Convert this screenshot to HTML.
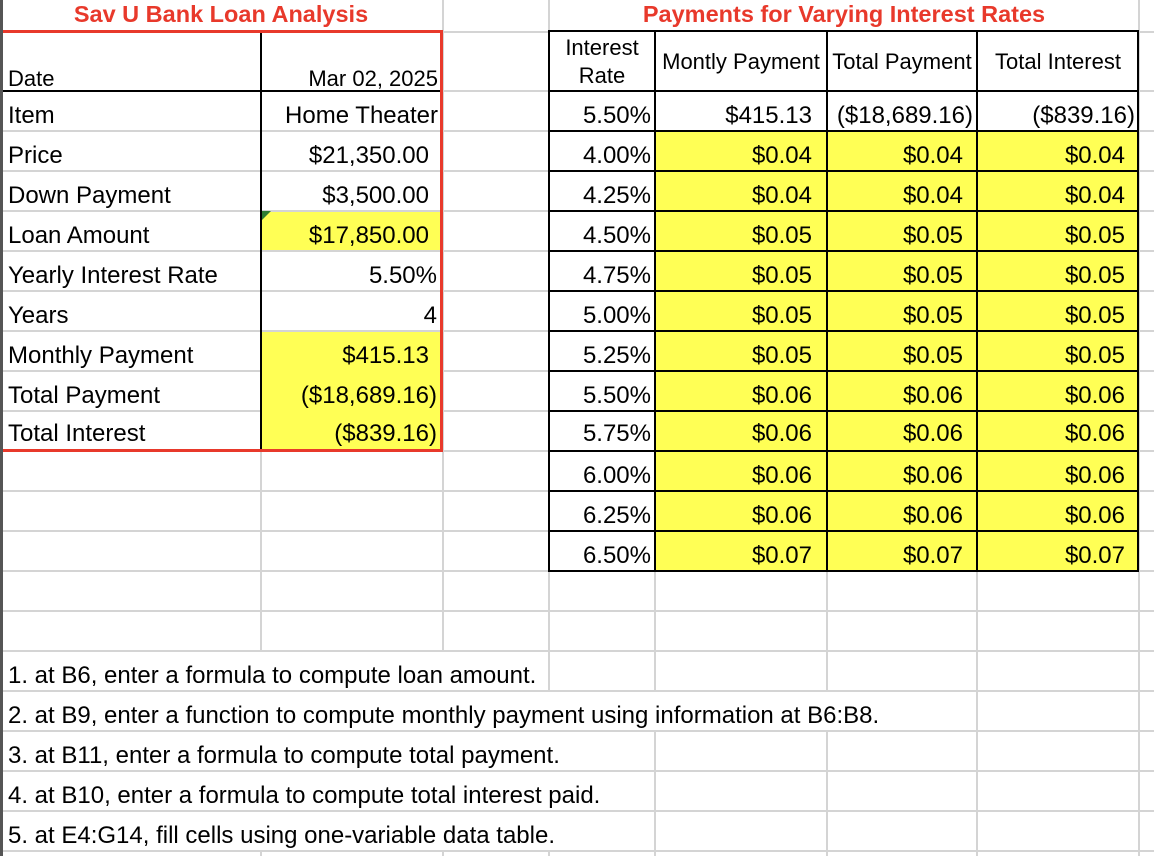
<!DOCTYPE html>
<html><head><meta charset="utf-8"><style>
*{margin:0;padding:0;box-sizing:border-box}
body{width:1154px;height:856px;background:#fff;position:relative;overflow:hidden;font-family:"Liberation Sans",Arial,sans-serif;font-size:24px;color:#000}
div{position:absolute}
.h{height:2px;background:#d4d4d4;left:0;width:1154px}
.v{width:2px;background:#d4d4d4;top:0;height:856px}
.y{background:#ffff55}
.t{line-height:40px;white-space:nowrap}
.r{text-align:right}
.bk{background:#000}
.rd{background:#e8392b}
.w{background:#fff}
.s{font-size:22px}
</style></head><body>
<div class="h" style="top:31px"></div><div class="h" style="top:90px"></div>
<div class="h" style="top:130px"></div><div class="h" style="top:170px"></div>
<div class="h" style="top:210px"></div><div class="h" style="top:250px"></div>
<div class="h" style="top:290px"></div><div class="h" style="top:330px"></div>
<div class="h" style="top:370px"></div><div class="h" style="top:410px"></div>
<div class="h" style="top:450px"></div><div class="h" style="top:490px"></div>
<div class="h" style="top:530px"></div><div class="h" style="top:570px"></div>
<div class="h" style="top:610px"></div><div class="h" style="top:650px"></div>
<div class="h" style="top:690px"></div><div class="h" style="top:730px"></div>
<div class="h" style="top:770px"></div><div class="h" style="top:810px"></div>
<div class="h" style="top:850px"></div>
<div class="v" style="left:260px"></div><div class="v" style="left:442px"></div>
<div class="v" style="left:548px"></div><div class="v" style="left:654px"></div>
<div class="v" style="left:826px"></div><div class="v" style="left:976px"></div>
<div class="v" style="left:1138px"></div>
<div style="left:0;top:0;width:3px;height:856px;background:#555"></div>
<div class="w" style="left:3px;top:0;width:438px;height:31px"></div>
<div class="w" style="left:551px;top:0;width:586px;height:31px"></div>
<div style="left:0;top:-3px;width:442px;text-align:center;color:#e8392b;font-weight:bold;font-size:23.5px;line-height:34px">Sav U Bank Loan Analysis</div>
<div style="left:549px;top:-3px;width:590px;text-align:center;color:#e8392b;font-weight:bold;font-size:23.5px;line-height:34px">Payments for Varying Interest Rates</div>
<div class="w" style="left:262px;top:33px;width:178px;height:57px"></div>
<div class="y" style="left:262px;top:212px;width:178px;height:38px"></div>
<div class="y" style="left:262px;top:332px;width:178px;height:118px"></div>
<div style="left:262px;top:211px;width:0;height:0;border-top:9px solid #2e7d32;border-right:9px solid transparent"></div>
<div class="bk" style="left:3px;top:90px;width:439px;height:2px"></div>
<div class="bk" style="left:260px;top:33px;width:2px;height:417px"></div>
<div class="rd" style="left:3px;top:30px;width:440px;height:3px"></div>
<div class="rd" style="left:440px;top:30px;width:3px;height:422px"></div>
<div class="rd" style="left:3px;top:449px;width:440px;height:3px"></div>
<div class="t s" style="left:8px;top:59px">Date</div>
<div class="t r s" style="left:262px;top:59px;width:176px">Mar 02, 2025</div>
<div class="t" style="left:8px;top:96px">Item</div><div class="t r" style="left:262px;top:96px;width:176px">Home Theater</div>
<div class="t" style="left:8px;top:136px">Price</div><div class="t r" style="left:262px;top:136px;width:167px">$21,350.00</div>
<div class="t" style="left:8px;top:176px">Down Payment</div><div class="t r" style="left:262px;top:176px;width:167px">$3,500.00</div>
<div class="t" style="left:8px;top:216px">Loan Amount</div><div class="t r" style="left:262px;top:216px;width:167px">$17,850.00</div>
<div class="t" style="left:8px;top:256px">Yearly Interest Rate</div><div class="t r" style="left:262px;top:256px;width:175px">5.50%</div>
<div class="t" style="left:8px;top:296px">Years</div><div class="t r" style="left:262px;top:296px;width:175px">4</div>
<div class="t" style="left:8px;top:336px">Monthly Payment</div><div class="t r" style="left:262px;top:336px;width:167px">$415.13</div>
<div class="t" style="left:8px;top:376px">Total Payment</div><div class="t r" style="left:262px;top:376px;width:175px">($18,689.16)</div>
<div class="t" style="left:8px;top:414px">Total Interest</div><div class="t r" style="left:262px;top:414px;width:175px">($839.16)</div>
<div class="w" style="left:550px;top:32px;width:588px;height:539px"></div>
<div class="y" style="left:655px;top:131px;width:484px;height:440px"></div>
<div class="bk" style="left:548px;top:30px;width:2px;height:542px"></div>
<div class="bk" style="left:654px;top:30px;width:2px;height:542px"></div>
<div class="bk" style="left:826px;top:30px;width:2px;height:542px"></div>
<div class="bk" style="left:976px;top:30px;width:2px;height:542px"></div>
<div class="bk" style="left:1137px;top:30px;width:2px;height:542px"></div>
<div class="bk" style="left:548px;top:30px;width:591px;height:2px"></div>
<div class="bk" style="left:548px;top:90px;width:591px;height:2px"></div>
<div class="bk" style="left:548px;top:130px;width:591px;height:2px"></div>
<div class="bk" style="left:548px;top:170px;width:591px;height:2px"></div>
<div class="bk" style="left:548px;top:210px;width:591px;height:2px"></div>
<div class="bk" style="left:548px;top:250px;width:591px;height:2px"></div>
<div class="bk" style="left:548px;top:290px;width:591px;height:2px"></div>
<div class="bk" style="left:548px;top:330px;width:591px;height:2px"></div>
<div class="bk" style="left:548px;top:370px;width:591px;height:2px"></div>
<div class="bk" style="left:548px;top:410px;width:591px;height:2px"></div>
<div class="bk" style="left:548px;top:450px;width:591px;height:2px"></div>
<div class="bk" style="left:548px;top:490px;width:591px;height:2px"></div>
<div class="bk" style="left:548px;top:530px;width:591px;height:2px"></div>
<div class="bk" style="left:548px;top:570px;width:591px;height:2px"></div>
<div class="s" style="left:550px;top:34px;width:104px;text-align:center;line-height:28px">Interest<br>Rate</div>
<div class="t s" style="left:656px;top:42px;width:170px;text-align:center">Montly Payment</div>
<div class="t s" style="left:828px;top:42px;width:148px;text-align:center">Total Payment</div>
<div class="t s" style="left:978px;top:42px;width:160px;text-align:center">Total Interest</div>
<div class="t r" style="left:550px;top:96px;width:101px">5.50%</div>
<div class="t r" style="left:656px;top:96px;width:156px">$415.13</div>
<div class="t r" style="left:828px;top:96px;width:145px">($18,689.16)</div>
<div class="t r" style="left:978px;top:96px;width:157px">($839.16)</div>
<div class="t r" style="left:550px;top:136px;width:101px">4.00%</div><div class="t r" style="left:656px;top:136px;width:156px">$0.04</div><div class="t r" style="left:828px;top:136px;width:135px">$0.04</div><div class="t r" style="left:978px;top:136px;width:147px">$0.04</div>
<div class="t r" style="left:550px;top:176px;width:101px">4.25%</div><div class="t r" style="left:656px;top:176px;width:156px">$0.04</div><div class="t r" style="left:828px;top:176px;width:135px">$0.04</div><div class="t r" style="left:978px;top:176px;width:147px">$0.04</div>
<div class="t r" style="left:550px;top:216px;width:101px">4.50%</div><div class="t r" style="left:656px;top:216px;width:156px">$0.05</div><div class="t r" style="left:828px;top:216px;width:135px">$0.05</div><div class="t r" style="left:978px;top:216px;width:147px">$0.05</div>
<div class="t r" style="left:550px;top:256px;width:101px">4.75%</div><div class="t r" style="left:656px;top:256px;width:156px">$0.05</div><div class="t r" style="left:828px;top:256px;width:135px">$0.05</div><div class="t r" style="left:978px;top:256px;width:147px">$0.05</div>
<div class="t r" style="left:550px;top:296px;width:101px">5.00%</div><div class="t r" style="left:656px;top:296px;width:156px">$0.05</div><div class="t r" style="left:828px;top:296px;width:135px">$0.05</div><div class="t r" style="left:978px;top:296px;width:147px">$0.05</div>
<div class="t r" style="left:550px;top:336px;width:101px">5.25%</div><div class="t r" style="left:656px;top:336px;width:156px">$0.05</div><div class="t r" style="left:828px;top:336px;width:135px">$0.05</div><div class="t r" style="left:978px;top:336px;width:147px">$0.05</div>
<div class="t r" style="left:550px;top:376px;width:101px">5.50%</div><div class="t r" style="left:656px;top:376px;width:156px">$0.06</div><div class="t r" style="left:828px;top:376px;width:135px">$0.06</div><div class="t r" style="left:978px;top:376px;width:147px">$0.06</div>
<div class="t r" style="left:550px;top:414px;width:101px">5.75%</div><div class="t r" style="left:656px;top:414px;width:156px">$0.06</div><div class="t r" style="left:828px;top:414px;width:135px">$0.06</div><div class="t r" style="left:978px;top:414px;width:147px">$0.06</div>
<div class="t r" style="left:550px;top:456px;width:101px">6.00%</div><div class="t r" style="left:656px;top:456px;width:156px">$0.06</div><div class="t r" style="left:828px;top:456px;width:135px">$0.06</div><div class="t r" style="left:978px;top:456px;width:147px">$0.06</div>
<div class="t r" style="left:550px;top:496px;width:101px">6.25%</div><div class="t r" style="left:656px;top:496px;width:156px">$0.06</div><div class="t r" style="left:828px;top:496px;width:135px">$0.06</div><div class="t r" style="left:978px;top:496px;width:147px">$0.06</div>
<div class="t r" style="left:550px;top:536px;width:101px">6.50%</div><div class="t r" style="left:656px;top:536px;width:156px">$0.07</div><div class="t r" style="left:828px;top:536px;width:135px">$0.07</div><div class="t r" style="left:978px;top:536px;width:147px">$0.07</div>
<div class="w" style="left:3px;top:652px;width:545px;height:38px"></div>
<div class="w" style="left:3px;top:692px;width:973px;height:38px"></div>
<div class="w" style="left:3px;top:732px;width:651px;height:38px"></div>
<div class="w" style="left:3px;top:772px;width:651px;height:38px"></div>
<div class="w" style="left:3px;top:812px;width:651px;height:38px"></div>
<div class="t" style="left:8px;top:656px">1. at B6, enter a formula to compute loan amount.</div>
<div class="t" style="left:8px;top:696px">2. at B9, enter a function to compute monthly payment using information at B6:B8.</div>
<div class="t" style="left:8px;top:736px">3. at B11, enter a formula to compute total payment.</div>
<div class="t" style="left:8px;top:776px">4. at B10, enter a formula to compute total interest paid.</div>
<div class="t" style="left:8px;top:816px">5. at E4:G14, fill cells using one-variable data table.</div>
</body></html>
